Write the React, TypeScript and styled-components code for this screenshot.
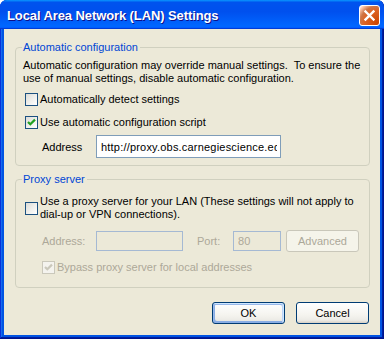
import React from 'react';
import styled, {createGlobalStyle} from 'styled-components';

const GlobalStyle = createGlobalStyle`
  html, body {
    margin: 0;
    padding: 0;
    background: #ffffff;
  }
`

const Window = styled.div`
  width: 384px;
  height: 339px;
  box-sizing: border-box;
  display: flex;
  flex-direction: column;
  padding-bottom: 4px;
  border-radius: 7px 7px 0 0;
  overflow: hidden;
  background: #0054e3;
  box-shadow: inset -1px -1px #00138c, inset 1px 1px #0831d9, inset -2px -2px #001ea0, inset 2px 2px #166aee;
  font-family: "Liberation Sans", Arial, sans-serif;
  font-size: 11px;
  color: #000000;
`

const TitleBar = styled.div`
  height: 29px;
  flex-shrink: 0;
  display: flex;
  align-items: center;
  justify-content: space-between;
  padding: 1px 4px 0 7px;
  box-sizing: border-box;
  background: linear-gradient(180deg, #0997ff, #0053ee 8%, #0050ee 40%, #0066ff 88%, #0066ff 93%, #005bff 95%, #003dd7 96%, #003dd7);
`

const Title = styled.div`
  color: #ffffff;
  font-weight: bold;
  font-size: 13px;
  text-shadow: 1px 1px #0f1089;
  letter-spacing: -0.1px;
`

const CloseButton = styled.div`
  width: 21px;
  height: 21px;
  box-sizing: border-box;
  border: 1px solid #ffffff;
  border-radius: 3px;
  display: flex;
  align-items: center;
  justify-content: center;
  background: radial-gradient(circle at 90% 90%, #cc4600 0%, #dc6527 55%, #cd7546 70%, #ffccb2 90%, #ffffff 100%);
`

const Body = styled.div`
  flex: 1;
  margin: 0 4px;
  background: #ece9d8;
  padding: 12px 10px 0 11px;
  display: flex;
  flex-direction: column;
`

const Group = styled.fieldset<{ $top: number, $bottom: number }>`
  margin: 0;
  min-width: 0;
  border: 1px solid #d0d0bf;
  border-radius: 4px;
  padding: ${p => p.$top}px 8px ${p => p.$bottom}px 7px;
  display: flex;
  flex-direction: column;

  & + & {
    margin-top: 7px;
  }
`

const Legend = styled.legend`
  color: #0046d5;
  line-height: 13px;
  padding: 0 2px 0 1px;
  margin-left: -1px;
`

const Text = styled.div`
  line-height: 13px;
  white-space: pre;
`

const CheckRow = styled.div<{ $top: number, $indent: number }>`
  display: flex;
  align-items: center;
  gap: 2px;
  margin-top: ${p => p.$top}px;
  padding-left: ${p => p.$indent}px;
  line-height: 13px;
`

const Label = styled.span<{ $disabled?: boolean }>`
  color: ${p => p.$disabled ? '#aca899' : '#000000'};
  white-space: pre;
`

const Box = styled.span<{ $disabled?: boolean }>`
  width: 13px;
  height: 13px;
  flex-shrink: 0;
  box-sizing: border-box;
  border: 1px solid ${p => p.$disabled ? '#cac8bb' : '#1c5180'};
  background: ${p => p.$disabled ? '#f4f3ee' : 'linear-gradient(135deg, #dcdcd7 0%, #f2f2ef 60%, #ffffff 100%)'};
  display: flex;
  align-items: center;
  justify-content: center;
`

const FieldRow = styled.div<{ $top: number }>`
  display: flex;
  align-items: center;
  margin-top: ${p => p.$top}px;
  padding-left: 19px;
`

const FieldLabel = styled.span<{ $width: number, $disabled?: boolean }>`
  width: ${p => p.$width}px;
  flex-shrink: 0;
  color: ${p => p.$disabled ? '#aca899' : '#000000'};
`

const Input = styled.input<{ $width: number, $height: number }>`
  width: ${p => p.$width}px;
  height: ${p => p.$height}px;
  box-sizing: border-box;
  border: 1px solid #7f9db9;
  padding: 0 3px 0 4px;
  margin: 0;
  font-family: "Liberation Sans", Arial, sans-serif;
  font-size: 11px;
  letter-spacing: 0.2px;
  color: #000000;
  background: #ffffff;
  outline: none;

  &:disabled {
    background: #ece9d8;
    color: #aca899;
    border-color: #a5b9d3;
  }
`

const Button = styled.button<{ $default?: boolean }>`
  width: 73px;
  height: 22px;
  box-sizing: border-box;
  margin: 0;
  padding: 0;
  border: 1px solid #003c74;
  border-radius: 3px;
  font-family: "Liberation Sans", Arial, sans-serif;
  font-size: 11px;
  color: #000000;
  background: linear-gradient(180deg, #ffffff, #f5f4ef 60%, #ecebe6 86%, #d6d0c5);
  box-shadow: ${p => p.$default ? 'inset -1px 1px #cee7ff, inset 1px 2px #98b8ea, inset -2px 2px #bcd4f6, inset 1px -1px #89ade4, inset 2px -2px #89ade4' : 'none'};

  &:disabled {
    border-color: #c9c7ba;
    color: #aca899;
    background: #f5f4ea;
  }
`

const Footer = styled.div`
  display: flex;
  justify-content: flex-end;
  gap: 11px;
  margin-top: 14px;
  padding-right: 1px;
`

const Check = ({checked, disabled}: { checked?: boolean, disabled?: boolean }) => (
    <Box $disabled={disabled}>
        {checked &&
            <svg width="9" height="9" viewBox="0 0 9 9">
                <path d="M1 4 L3.3 6.3 L8 1.6" fill="none" stroke={disabled ? '#cac8bb' : '#21a121'}
                      strokeWidth="2.2"/>
            </svg>
        }
    </Box>
)

export default function App() {
    return (
        <>
            <GlobalStyle/>
            <Window>
                <TitleBar>
                    <Title>Local Area Network (LAN) Settings</Title>
                    <CloseButton>
                        <svg width="13" height="13" viewBox="0 0 13 13">
                            <path d="M2.5 2.5 L10.5 10.5 M10.5 2.5 L2.5 10.5" stroke="#ffffff" strokeWidth="2.4"
                                  strokeLinecap="square"/>
                        </svg>
                    </CloseButton>
                </TitleBar>
                <Body>
                    <Group $top={5} $bottom={7}>
                        <Legend>Automatic configuration</Legend>
                        <Text>{'Automatic configuration may override manual settings.  To ensure the\nuse of manual settings, disable automatic configuration.'}</Text>
                        <CheckRow $top={8} $indent={2}>
                            <Check/>
                            <Label>Automatically detect settings</Label>
                        </CheckRow>
                        <CheckRow $top={10} $indent={2}>
                            <Check checked/>
                            <Label>Use automatic configuration script</Label>
                        </CheckRow>
                        <FieldRow $top={6}>
                            <FieldLabel $width={54}>Address</FieldLabel>
                            <Input $width={185} $height={23} readOnly
                                   value="http://proxy.obs.carnegiescience.edu"/>
                        </FieldRow>
                    </Group>
                    <Group $top={9} $bottom={13}>
                        <Legend>Proxy server</Legend>
                        <CheckRow $top={0} $indent={2}>
                            <Check/>
                            <Label>{'Use a proxy server for your LAN (These settings will not apply to\ndial-up or VPN connections).'}</Label>
                        </CheckRow>
                        <FieldRow $top={9}>
                            <FieldLabel $width={54} $disabled>Address:</FieldLabel>
                            <Input $width={87} $height={20} disabled value=""/>
                            <FieldLabel $width={36} $disabled style={{marginLeft: 14}}>Port:</FieldLabel>
                            <Input $width={48} $height={20} disabled value="80"/>
                            <Button disabled style={{marginLeft: 5}}>Advanced</Button>
                        </FieldRow>
                        <CheckRow $top={9} $indent={19}>
                            <Check checked disabled/>
                            <Label $disabled>Bypass proxy server for local addresses</Label>
                        </CheckRow>
                    </Group>
                    <Footer>
                        <Button $default>OK</Button>
                        <Button>Cancel</Button>
                    </Footer>
                </Body>
            </Window>
        </>
    )
}
